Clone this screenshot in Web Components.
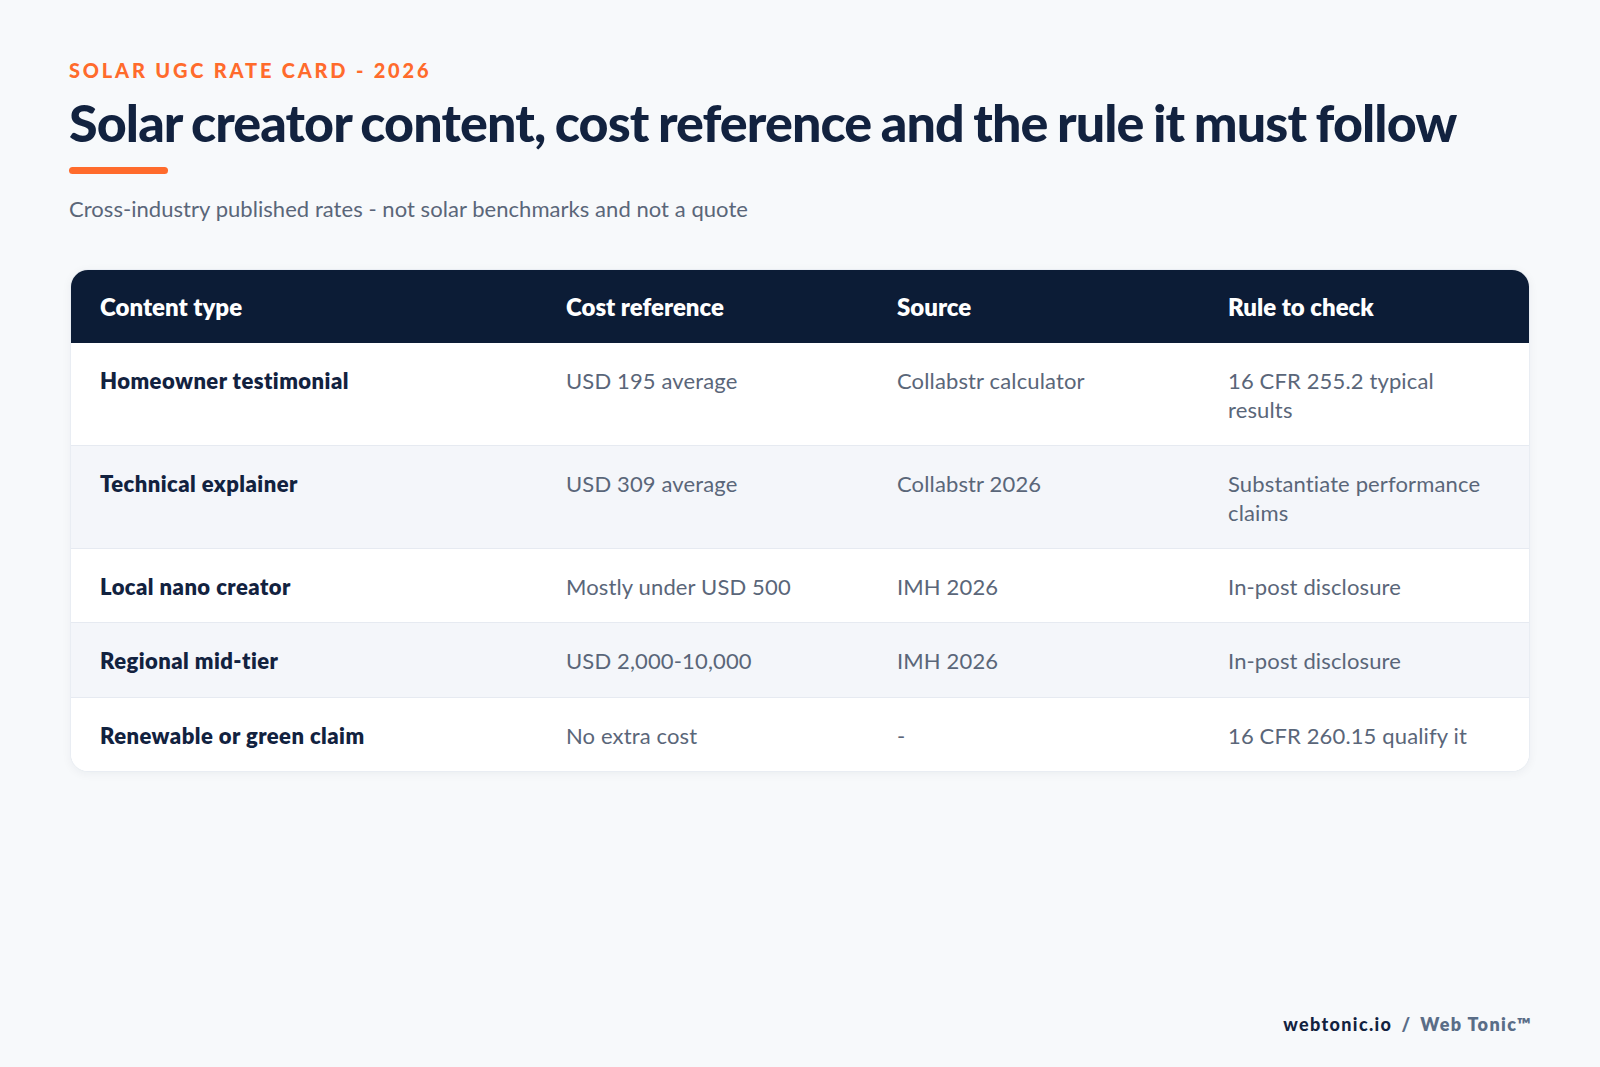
<!DOCTYPE html>
<html lang="en"><head><meta charset="utf-8"><title>Rate card</title>
<style>
html,body{margin:0;background:#f7f9fb}
body{font-family:Lato,sans-serif}
</style></head><body>
<rate-page>
  <rate-header eyebrow="SOLAR UGC RATE CARD - 2026" title="Solar creator content, cost reference and the rule it must follow" sub="Cross-industry published rates - not solar benchmarks and not a quote"></rate-header>
  <rate-table>
    <rate-row head><span>Content type</span><span>Cost reference</span><span>Source</span><span>Rule to check</span></rate-row>
    <rate-row><span>Homeowner testimonial</span><span>USD 195 average</span><span>Collabstr calculator</span><span>16 CFR 255.2 typical results</span></rate-row>
    <rate-row alt><span>Technical explainer</span><span>USD 309 average</span><span>Collabstr 2026</span><span>Substantiate performance claims</span></rate-row>
    <rate-row><span>Local nano creator</span><span>Mostly under USD 500</span><span>IMH 2026</span><span>In-post disclosure</span></rate-row>
    <rate-row alt><span>Regional mid-tier</span><span>USD 2,000-10,000</span><span>IMH 2026</span><span>In-post disclosure</span></rate-row>
    <rate-row last><span>Renewable or green claim</span><span>No extra cost</span><span>-</span><span>16 CFR 260.15 qualify it</span></rate-row>
  </rate-table>
  <rate-footer><b>webtonic.io</b><i>/</i><span>Web Tonic™</span></rate-footer>
</rate-page>
<script>
function def(name, css, html, extra){
  customElements.define(name, class extends HTMLElement{
    constructor(){super();const s=this.attachShadow({mode:'open'});s.innerHTML='<style>'+css+'</style>'+html;}
    connectedCallback(){ if(extra) extra(this); }
  });
}
def('rate-page',`:host{display:flex;flex-direction:column;box-sizing:border-box;width:1600px;height:1067px;padding:56px 70px 0;background:#f7f9fb;font-family:Lato,sans-serif;font-variant-ligatures:none}`,`<slot></slot>`);
def('rate-header',`:host{display:block;margin-left:-1px}
 .e{font-size:20px;line-height:28px;font-weight:900;letter-spacing:2.8px;color:#ff6b2c}
 h1{margin:5.5px 0 0;font-size:52px;line-height:64px;font-weight:900;letter-spacing:-.9px;word-spacing:-2px;color:#12223f}
 .b{width:99px;height:7px;border-radius:4px;background:#ff6b2c;margin-top:13px}
 p{margin:20.5px 0 0;font-size:22px;line-height:30px;color:#5a6679;letter-spacing:.05px}`,
 `<div class="e"></div><h1></h1><div class="b"></div><p></p>`,el=>{
   const s=el.shadowRoot;
   s.querySelector('.e').textContent=el.getAttribute('eyebrow');
   s.querySelector('h1').textContent=el.getAttribute('title');
   s.querySelector('p').textContent=el.getAttribute('sub');
 });
def('rate-table',`:host{display:block;margin-top:45px;border-radius:18px;overflow:hidden;background:#fff;border:1px solid #e9edf3;box-shadow:0 2px 10px rgba(16,32,64,.05)}`,`<slot></slot>`);
def('rate-row',`:host{display:grid;grid-template-columns:466px 331px 331px 1fr;box-sizing:border-box;border-bottom:1px solid #e6eaf1;background:#fff;font-size:22px;line-height:28.6px;letter-spacing:.14px;color:#5a6679}
 :host([alt]){background:#f4f6fa}
 :host([last]){border-bottom:0}
 :host([head]){background:#0c1c36;color:#fff;border-bottom:0;font-size:24px;line-height:31.2px;letter-spacing:0}
 ::slotted(span){padding:24.2px 30px 20.6px 29px;display:block}
 ::slotted(span:first-child){font-weight:800;color:#12223f;letter-spacing:.45px}
 :host([head]) ::slotted(span){padding-top:21.4px;padding-bottom:20.4px;color:#fff;font-weight:800;letter-spacing:0}`,`<slot></slot>`);
def('rate-footer',`:host{position:absolute;right:68px;top:1011px;display:flex;gap:9px;font-size:18px;line-height:26px;letter-spacing:1.35px;font-weight:800;color:#5a6d87}
 ::slotted(b){color:#12223f;font-weight:900}
 ::slotted(i){font-style:normal}`,`<slot></slot>`);
</script>
</body></html>
